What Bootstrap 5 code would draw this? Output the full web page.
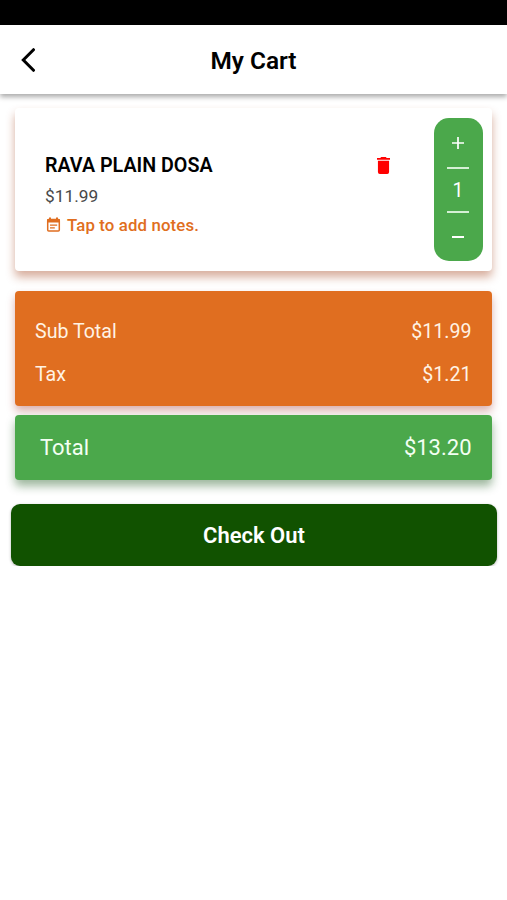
<!DOCTYPE html>
<html lang="en">
<head>
<meta charset="utf-8">
<meta name="viewport" content="width=device-width, initial-scale=1">
<title>My Cart</title>
<link href="https://cdn.jsdelivr.net/npm/bootstrap@5.3.0/dist/css/bootstrap.min.css" rel="stylesheet">
<style>
body{font-family:Roboto,"Liberation Sans",sans-serif;background:#fff;color:#000;overflow:hidden;line-height:24px}
.status-strip{height:25px;background:#000}
.app-bar{height:69px;box-shadow:0 3px 5px rgba(0,0,0,.33);display:grid;grid-template-columns:56px 1fr 56px}
.app-bar h1{font-size:24.4px;font-weight:600;line-height:28px;padding-top:3px}
.back-btn{padding:0 0 0 19px;border-radius:0}
.mx-edge{margin-left:15px;margin-right:15px}
.item-card{height:163px;margin-top:14px;border-radius:4px;box-shadow:0 6px 10px rgba(160,60,20,.42);padding:10px 9.5px 10px 30px}
.item-text{padding-top:36px}
.item-name{font-size:19.7px;font-weight:600}
.item-price{font-size:17.3px;color:#484848;margin-top:6px}
.item-note{font-size:16.8px;letter-spacing:.13px;font-weight:500;color:#e06e20;margin-top:5px}
.note-icon{margin-right:5px}
.trash-btn{margin:38.5px 43.5px 0 0;align-self:flex-start}
.stepper{width:49px;border-radius:15px;background:#4ba84b;color:#fff;font-size:19.5px}
.stepper hr{width:22px;margin:0;border-top:2px solid #d5f0d5;opacity:1}
.step-btn{height:48px;width:100%}
.step-btn-top{height:49px}
.step-count{height:42px;padding-top:2px}
.sum-card{height:115px;margin-top:20px;background:#e06e20;color:#fff3e4;border-radius:4px;padding:29px 20.5px 0 20px;font-size:19.6px;box-shadow:0 5px 9px rgba(150,30,20,.35)}
.sum-row{height:43px}
.total-card{height:65px;margin-top:9px;background:#4ba84b;color:#f3fff3;border-radius:4px;padding:1px 20.5px 0 25px;font-size:22px;box-shadow:0 6px 10px rgba(20,80,20,.42)}
.checkout{height:62px;margin:24px 10px 0 11px;padding-top:7px;background:#115200;border:0;border-radius:9px;font-size:22px;font-weight:600;color:#fff;box-shadow:0 1px 3px rgba(0,0,0,.3)}
</style>
</head>
<body>
<div class="status-strip"></div>
<header class="app-bar bg-white align-items-center">
<button class="btn back-btn d-flex" aria-label="Back"><svg width="16" height="24" viewBox="0 0 16 24" fill="none" stroke="#000" stroke-width="3" stroke-linecap="round"><path d="M13.500 1.700 3.300 12 13.500 22.300"/></svg></button>
<h1 class="text-center mb-0">My Cart</h1>
</header>
<main class="d-flex flex-column">
<section class="item-card bg-white d-flex mx-edge">
<div class="flex-grow-1 d-flex flex-column item-text">
<div class="item-name">RAVA PLAIN DOSA</div>
<div class="item-price">$11.99</div>
<div class="item-note d-flex align-items-center"><svg class="note-icon" width="17" height="18" viewBox="0 0 17 18"><rect x="2.700" y="3.500" width="11.600" height="11.500" rx="1" fill="none" stroke="currentColor" stroke-width="1.500"/><path fill="currentColor" d="M2.200 3h12.600v3.500H2.200zM4 1.500h2v2H4zM11 1.500h2v2h-2zM5 8.500h7.200v1.300H5zM5 11.200h4.800v1.300H5z"/></svg>Tap to add notes.</div>
</div>
<button class="btn p-0 border-0 trash-btn d-flex" aria-label="Remove"><svg width="13" height="17" viewBox="5 3 14 18" preserveAspectRatio="none" fill="#f00"><path d="M6 7h12v12a2 2 0 0 1-2 2H8a2 2 0 0 1-2-2zM5 4h3.500l1-1h5l1 1H19v2H5z"/></svg></button>
<div class="stepper d-flex flex-column align-items-center">
<button class="btn p-0 border-0 step-btn step-btn-top d-flex align-items-center justify-content-center" aria-label="Add one"><svg width="12" height="12" stroke="#fff" stroke-width="1.700"><path d="M0 6h12M6 0v12"/></svg></button>
<hr>
<div class="step-count d-flex align-items-center">1</div>
<hr>
<button class="btn p-0 border-0 step-btn d-flex align-items-center justify-content-center" aria-label="Remove one"><svg width="12" height="12" stroke="#fff" stroke-width="2"><path d="M0 6h12"/></svg></button>
</div>
</section>
<section class="sum-card mx-edge">
<div class="d-flex justify-content-between sum-row"><span>Sub Total</span><span>$11.99</span></div>
<div class="d-flex justify-content-between sum-row"><span>Tax</span><span>$1.21</span></div>
</section>
<section class="total-card mx-edge d-flex justify-content-between align-items-center"><span>Total</span><span>$13.20</span></section>
<button class="btn checkout">Check Out</button>
</main>
<script src="https://cdn.jsdelivr.net/npm/bootstrap@5.3.0/dist/js/bootstrap.bundle.min.js"></script>
</body>
</html>
